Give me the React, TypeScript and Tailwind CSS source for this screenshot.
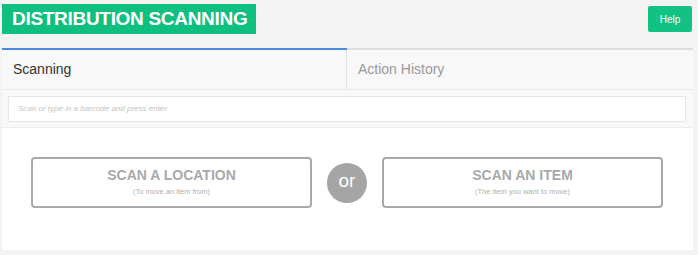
export default function App() {
  return (
    <div
      className="w-[698px] h-[255px] bg-[#f3f3f3] overflow-hidden"
      style={{ fontFamily: '"Liberation Sans", Arial, sans-serif' }}
    >
      <div className="flex items-start justify-between pl-[2px] pr-[6px]">
        <h1 className="mt-[4px] h-[30px] w-[254px] bg-[#0fbf80] text-white font-bold text-[19px] leading-[30px] pl-[10px] whitespace-nowrap tracking-[-0.3px]">
          DISTRIBUTION SCANNING
        </h1>
        <button className="mt-[6px] h-[26px] w-[44px] rounded-[2px] bg-[#12c283] text-white text-[10px]">
          Help
        </button>
      </div>

      <div className="mt-[14px] ml-[2px] w-[691px] h-[202px] flex flex-col bg-[#f8f8f8] border-t-2 border-[#dedede]">
        <div className="flex h-[40px] border-b border-[#e8e8e8]">
          <div className="relative w-[345px] border-r border-[#e2e2e2] flex items-center pl-[11px] text-[14px] text-[#333]">
            <div className="absolute left-0 right-[-1px] top-[-2px] h-[2px] bg-[#4a8ae0]" />
            Scanning
          </div>
          <div className="flex-1 flex items-center pl-[11px] text-[14px] text-[#999]">
            Action History
          </div>
        </div>

        <div className="px-[6px] pt-[6px] pb-[5px] border-b border-[#ececec]">
          <div className="h-[26px] w-[678px] bg-white border border-[#e6e6e6] flex items-center pl-[9px] text-[8px] italic text-[#c4c4c4]">
            Scan or type in a barcode and press enter
          </div>
        </div>

        <div className="flex-1 bg-white flex items-center pl-[29px] pb-[13px]">
          <div className="w-[281px] h-[51px] rounded-[4px] border-2 border-[#a9a9a9] flex flex-col items-center justify-center">
            <div className="text-[14px] font-bold text-[#a9a9a9] leading-[16px]">SCAN A LOCATION</div>
            <div className="text-[7.5px] text-[#b0b0b0] mt-[3px]">(To move an item from)</div>
          </div>
          <div className="mx-[15px] w-[40px] h-[40px] rounded-full bg-[#a5a5a5] flex items-center justify-center text-white text-[19px] pb-[2px]">
            or
          </div>
          <div className="w-[281px] h-[51px] rounded-[4px] border-2 border-[#a9a9a9] flex flex-col items-center justify-center">
            <div className="text-[14px] font-bold text-[#a9a9a9] leading-[16px]">SCAN AN ITEM</div>
            <div className="text-[7.5px] text-[#b0b0b0] mt-[3px]">(The item you want to move)</div>
          </div>
        </div>
      </div>
    </div>
  );
}
